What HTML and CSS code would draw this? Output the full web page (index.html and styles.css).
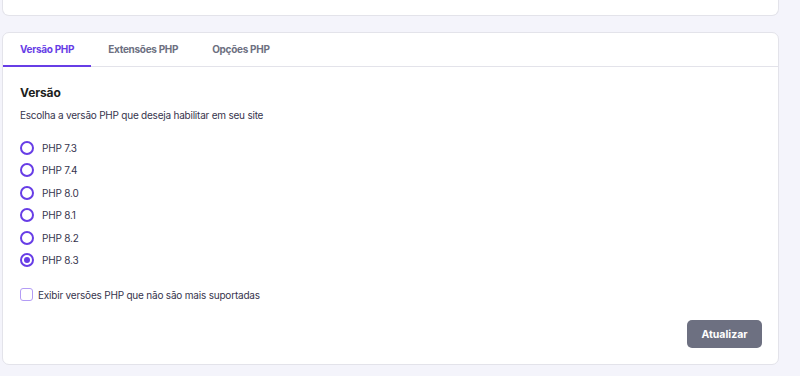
FILE: index.html
```html
<!DOCTYPE html>
<html lang="pt">
<head>
<meta charset="utf-8">
<link rel="stylesheet" href="styles.css">
</head>
<body>
<div class="page">
  <div class="card card-top">
    <p class="top-text">Última alteração aplicada (g)</p>
  </div>
  <div class="card card-main">
    <nav class="tabs">
      <div class="tab active">Versão PHP</div>
      <div class="tab">Extensões PHP</div>
      <div class="tab">Opções PHP</div>
    </nav>
    <div class="content">
      <h2 class="title">Versão</h2>
      <p class="desc">Escolha a versão PHP que deseja habilitar em seu site</p>
      <ul class="radios">
        <li class="radio-row"><span class="radio"></span><span class="label">PHP 7.3</span></li>
        <li class="radio-row"><span class="radio"></span><span class="label">PHP 7.4</span></li>
        <li class="radio-row"><span class="radio"></span><span class="label">PHP 8.0</span></li>
        <li class="radio-row"><span class="radio"></span><span class="label">PHP 8.1</span></li>
        <li class="radio-row"><span class="radio"></span><span class="label">PHP 8.2</span></li>
        <li class="radio-row"><span class="radio checked"></span><span class="label">PHP 8.3</span></li>
      </ul>
      <label class="check-row"><span class="checkbox"></span><span class="label">Exibir versões PHP que não são mais suportadas</span></label>
      <div class="actions">
        <button class="btn">Atualizar</button>
      </div>
    </div>
  </div>
</div>
</body>
</html>
```
FILE: styles.css
```css
* { box-sizing: border-box; }
html, body { margin: 0; padding: 0; }
body {
  background: #f4f4fb;
  font-family: "Inter", "Noto Sans", sans-serif;
  color: #36344d;
  width: 800px;
  height: 376px;
  overflow: hidden;
}
.page {
  padding: 0 21px 0 2px;
  display: flex;
  flex-direction: column;
  gap: 16px;
}
.card {
  background: #fff;
  border: 1px solid #e3e3ea;
  border-radius: 7px;
}
.card-top {
  height: 16px;
  border-top: none;
  border-radius: 0 0 7px 7px;
  overflow: hidden;
  position: relative;
}
.top-text {
  margin: 0;
  position: absolute;
  left: 18px;
  top: -12px;
  font-size: 10px;
  color: #d0d0d8;
}
.card-main {
  height: 333px;
  display: flex;
  flex-direction: column;
}
.tabs {
  display: flex;
  height: 34px;
  border-bottom: 1px solid #e3e3ea;
}
.tab {
  padding: 0 17px;
  display: flex;
  align-items: center;
  font-size: 10px;
  letter-spacing: -0.3px;
  font-weight: 700;
  color: #6d7081;
  border-bottom: 2px solid transparent;
  margin-bottom: -1px;
}
.tab.active {
  color: #673de6;
  border-bottom-color: #673de6;
}
.content {
  padding: 18px 16px 16px 17px;
  display: flex;
  flex-direction: column;
  flex: 1;
}
.title {
  margin: 0;
  font-size: 12px;
  font-weight: 700;
  color: #1d1e20;
  line-height: 16px;
  letter-spacing: -0.1px;
}
.desc {
  margin: 7px 0 0;
  font-size: 10px;
  letter-spacing: -0.22px;
  line-height: 14px;
  color: #36344d;
}
.radios {
  list-style: none;
  margin: 19px 0 0;
  padding: 0;
  display: flex;
  flex-direction: column;
  gap: 8.4px;
}
.radio-row {
  display: flex;
  align-items: center;
  height: 14px;
}
.radio {
  width: 14px;
  height: 14px;
  border: 2px solid #673de6;
  border-radius: 50%;
  margin-right: 8px;
  display: flex;
  align-items: center;
  justify-content: center;
}
.radio.checked::after {
  content: "";
  width: 6px;
  height: 6px;
  border-radius: 50%;
  background: #673de6;
}
.label {
  font-size: 10px;
  letter-spacing: -0.2px;
  color: #36344d;
}
.check-row {
  display: flex;
  align-items: center;
  margin-top: 21px;
  height: 14px;
}
.checkbox {
  width: 13px;
  height: 13px;
  border: 1.5px solid #b39cf5;
  border-radius: 3px;
  margin-right: 5px;
}
.actions {
  margin-top: auto;
  display: flex;
  justify-content: flex-end;
}
.btn {
  width: 75px;
  height: 28px;
  border: none;
  border-radius: 5px;
  background: #6d7081;
  color: #fff;
  font-family: inherit;
  font-size: 10.5px;
  font-weight: 700;
}
```
